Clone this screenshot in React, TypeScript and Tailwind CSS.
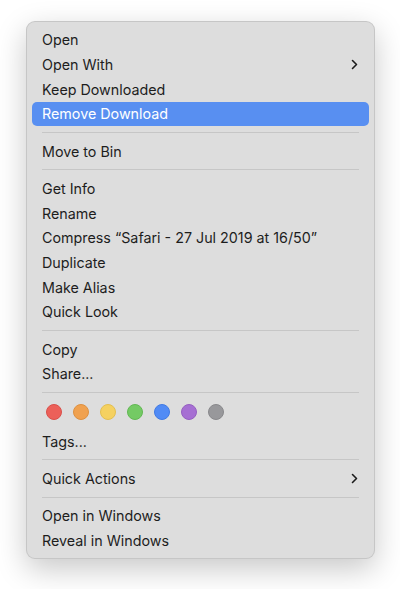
import React from "react"

type Item = { label: string; sub?: boolean; active?: boolean } | "sep" | "tags"

const items: Item[] = [
  { label: "Open" },
  { label: "Open With", sub: true },
  { label: "Keep Downloaded" },
  { label: "Remove Download", active: true },
  "sep",
  { label: "Move to Bin" },
  "sep",
  { label: "Get Info" },
  { label: "Rename" },
  { label: "Compress \u201cSafari - 27 Jul 2019 at 16/50\u201d" },
  { label: "Duplicate" },
  { label: "Make Alias" },
  { label: "Quick Look" },
  "sep",
  { label: "Copy" },
  { label: "Share..." },
  "sep",
  "tags",
  { label: "Tags..." },
  "sep",
  { label: "Quick Actions", sub: true },
  "sep",
  { label: "Open in Windows" },
  { label: "Reveal in Windows" },
]

const tagColors = [
  "bg-[#ec6059] border-[#d9504a]",
  "bg-[#f0a14f] border-[#dd9040]",
  "bg-[#f5d160] border-[#e3bf50]",
  "bg-[#74ca64] border-[#62b853]",
  "bg-[#518bf5] border-[#417ae3]",
  "bg-[#a66fd3] border-[#955fc1]",
  "bg-[#98989b] border-[#88888b]",
]

function Chevron() {
  return (
    <svg width="7" height="11" viewBox="0 0 7 11" fill="none">
      <path d="M1.5 1.5L5.5 5.5L1.5 9.5" stroke="#1a1a1a" strokeWidth="1.6" strokeLinecap="round" strokeLinejoin="round" />
    </svg>
  )
}

export default function App() {
  return (
    <div className="w-[400px] h-[589px] bg-white pt-[21px] pl-[26px]" style={{ fontFamily: "Inter, 'Noto Sans', sans-serif" }}>
      <div className="w-[349px] h-[538px] rounded-[9px] bg-[#dddddd] border border-black/10 shadow-[0_10px_30px_rgba(0,0,0,0.22)] px-[5px] pt-[5.6px]">
        {items.map((item, i) => {
          if (item === "sep") {
            return (
              <div key={i} className="h-[12.6px] flex items-center px-[10px]">
                <div className="h-px w-full bg-[#c6c6c6]" />
              </div>
            )
          }
          if (item === "tags") {
            return (
              <div key={i} className="h-[30px] flex items-start gap-[11px] pl-[14px] pt-[5px]">
                {tagColors.map((c, j) => (
                  <div key={j} className={`w-[16px] h-[16px] rounded-full border ${c}`} />
                ))}
              </div>
            )
          }
          return (
            <div
              key={i}
              className={`h-[24.7px] flex items-center justify-between pl-[10px] pr-[11px] rounded-[5px] text-[14.3px] ${
                item.active ? "bg-[#588ff1] text-white" : "text-[#1d1d1d]"
              }`}
            >
              <span>{item.label}</span>
              {item.sub && <Chevron />}
            </div>
          )
        })}
      </div>
    </div>
  )
}
